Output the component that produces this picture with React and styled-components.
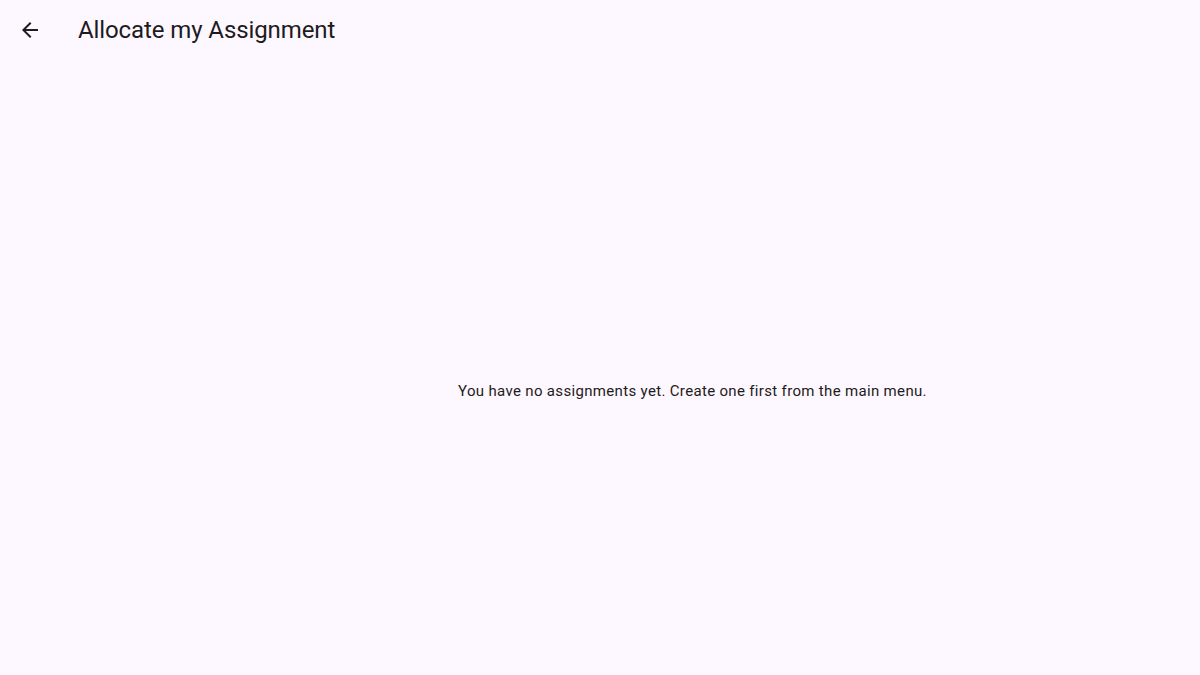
import styled, { createGlobalStyle } from "styled-components";

const GlobalStyle = createGlobalStyle`
  html, body {
    margin: 0;
    padding: 0;
    background: #fdf7ff;
  }
  body {
    font-family: Roboto, "Noto Sans", sans-serif;
    color: #1d1b20;
  }
`;

const Page = styled.div`
  display: flex;
  flex-direction: column;
  width: 1200px;
  height: 675px;
  background: #fdf7ff;
`;

const TopBar = styled.header`
  display: flex;
  align-items: center;
  height: 60px;
  padding-left: 18px;
  flex-shrink: 0;
`;

const BackButton = styled.button`
  display: flex;
  align-items: center;
  justify-content: center;
  width: 24px;
  height: 24px;
  padding: 0;
  border: none;
  background: none;
  color: #1d1b20;
  cursor: pointer;
`;

const Title = styled.h1`
  margin: 0 0 0 36px;
  font-size: 24px;
  font-weight: 400;
  line-height: 30px;
  letter-spacing: -0.1px;
  color: #1d1b20;
`;

const Body = styled.main`
  flex: 1;
  display: flex;
  align-items: center;
  justify-content: center;
  padding-left: 185px;
  padding-top: 46px;
`;

const EmptyText = styled.p`
  margin: 0;
  font-size: 15px;
  line-height: 20px;
  letter-spacing: 0.33px;
  color: #1d1b20;
`;

const ArrowBack = () => (
  <svg width="24" height="24" viewBox="0 0 24 24" fill="currentColor">
    <path d="M20 11H7.83l5.59-5.59L12 4l-8 8 8 8 1.41-1.41L7.83 13H20v-2z" />
  </svg>
);

export default function App() {
  return (
    <>
      <GlobalStyle />
      <Page>
        <TopBar>
          <BackButton aria-label="Back">
            <ArrowBack />
          </BackButton>
          <Title>Allocate my Assignment</Title>
        </TopBar>
        <Body>
          <EmptyText>
            You have no assignments yet. Create one first from the main menu.
          </EmptyText>
        </Body>
      </Page>
    </>
  );
}
